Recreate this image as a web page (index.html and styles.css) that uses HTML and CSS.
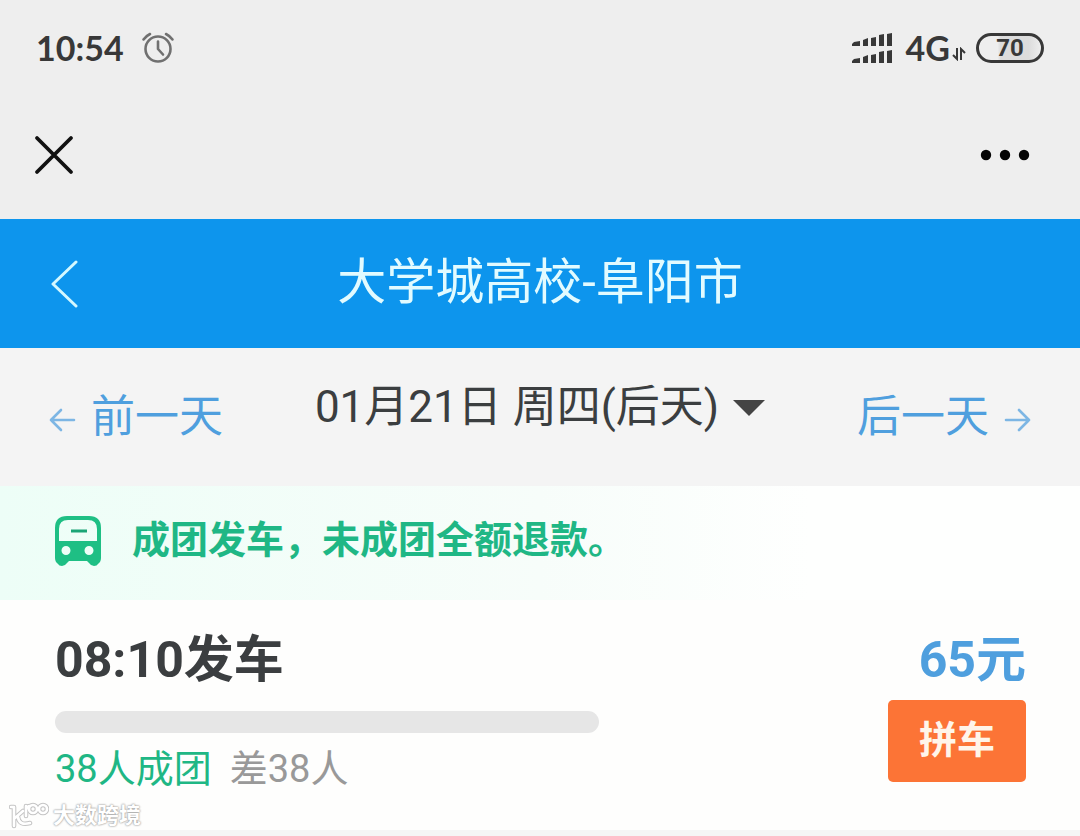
FILE: index.html
```html
<!DOCTYPE html>
<html lang="zh-CN">
<head>
  <meta charset="UTF-8" />
  <meta name="viewport" content="width=device-width, initial-scale=1.0" />
  <title>大学城高校-阜阳市</title>
  <link rel="stylesheet" href="styles.css">
</head>
<body>
  <div class="status-bar">
    <div class="status-group">
      <span class="clock">10:54</span>
      <svg class="alarm" width="34" height="34" viewBox="0 0 34 34" fill="none" stroke="#707070" stroke-width="2.6" stroke-linecap="round" stroke-linejoin="round">
        <circle cx="17" cy="18" r="12.5" />
        <path d="M17 10.5V18l5 5.5" />
        <path d="M2.5 8.5Q5 5 9 3M31.5 8.5Q29 5 25 3" />
      </svg>
    </div>
    <div class="status-group">
      <svg class="signal" width="42" height="32" viewBox="0 0 42 32" fill="#383838">
        <path d="M0 12l2-2 6-1v5H0zM11 8l5-2v8h-5zM19 6l5-1v9h-5zM27 3l5-1v12h-5zM35 2l5-1v13h-5z" />
        <path d="M0 29l2-2 6-1v5H0zM11 25l5-2v8h-5zM19 23l5-1v9h-5zM27 20l5-1v12h-5zM35 19l5-1v13h-5z" />
      </svg>
      <span class="network">4G</span>
      <svg class="updown" width="14" height="14" viewBox="0 0 14 14" fill="none" stroke="#383838" stroke-width="2">
        <path d="M5 1v11L1 8M9 13V2l4 4" />
      </svg>
      <span class="battery">70</span>
    </div>
  </div>

  <div class="nav-bar">
    <button class="icon-btn" aria-label="关闭">
      <svg width="40" height="40" viewBox="0 0 40 40" stroke="#111" stroke-width="3.8" stroke-linecap="round">
        <path d="M3 3l34 34M37 3L3 37" />
      </svg>
    </button>
    <button class="icon-btn" aria-label="更多">
      <svg width="50" height="12" viewBox="0 0 50 12" fill="#050505">
        <circle cx="6" cy="6" r="5.2" />
        <circle cx="25" cy="6" r="5.2" />
        <circle cx="44" cy="6" r="5.2" />
      </svg>
    </button>
  </div>

  <header class="header">
    <button class="icon-btn back" aria-label="返回">
      <svg width="28" height="50" viewBox="0 0 28 50" fill="none" stroke="#d4f8ff" stroke-width="3" stroke-linecap="round" stroke-linejoin="round">
        <path d="M26 3L3 25l23 22" />
      </svg>
    </button>
    <h1>大学城高校-阜阳市</h1>
  </header>

  <nav class="date-bar">
    <a href="#" class="day-link">
      <svg width="28" height="28" viewBox="0 0 28 28" fill="none" stroke="#7db6e4" stroke-width="2.6" stroke-linecap="round" stroke-linejoin="round">
        <path d="M26 14H3M13 4L3 14l10 10" />
      </svg>
      <span>前一天</span>
    </a>
    <button class="date-btn">
      <span>01月21日 周四(后天)</span>
      <i class="caret"></i>
    </button>
    <a href="#" class="day-link next">
      <span>后一天</span>
      <svg width="28" height="28" viewBox="0 0 28 28" fill="none" stroke="#7db6e4" stroke-width="2.6" stroke-linecap="round" stroke-linejoin="round">
        <path d="M2 14h23M15 4l10 10-10 10" />
      </svg>
    </a>
  </nav>

  <div class="notice">
    <svg width="48" height="52" viewBox="0 0 48 52">
      <path fill="#1ebf84" fill-rule="evenodd" d="M13 1h22Q47 1 47 13v30q0 2-1 4l-2 2q-1 2-4 2-3 0-5-3l-2-2H15l-2 2q-2 3-5 3-3 0-4-2l-2-2q-1-2-1-4V13Q1 1 13 1zM14 5Q5 5 5 14v12h38V14q0-9-9-9zM12 31a4.500 4.500 0 1 0 0 9 4.500 4.500 0 0 0 0-9zM35 31a4.500 4.500 0 1 0 0 9 4.500 4.500 0 0 0 0-9z" />
      <path d="M17 16h16" stroke="#1ba576" stroke-width="3" />
    </svg>
    <p>成团发车，未成团全额退款。</p>
  </div>

  <main class="trip">
    <div class="trip-info">
      <h2>08:10发车</h2>
      <div class="progress" role="progressbar" aria-label="成团进度" aria-valuenow="0" aria-valuemin="0" aria-valuemax="38"></div>
      <p class="people"><span class="need">38人成团</span><span>差38人</span></p>
    </div>
    <div class="trip-side">
      <strong class="price">65元</strong>
      <button class="join-btn">拼车</button>
    </div>
    <div class="watermark">
      <svg width="40" height="28" viewBox="0 0 40 28" fill="none" stroke-linecap="round" stroke-linejoin="round">
        <g stroke="#c4c4c4" stroke-width="4.6">
          <path d="M2 5h3v19M14 9l-8 7M9 15q1 9 12 6" />
          <path d="M17 14V4M17 8q1-4 4-4" />
          <circle cx="24" cy="7" r="4" />
          <circle cx="34" cy="7" r="4" />
        </g>
        <g stroke="#fff" stroke-width="2.6">
          <path d="M2 5h3v19M14 9l-8 7M9 15q1 9 12 6" />
          <path d="M17 14V4M17 8q1-4 4-4" />
          <circle cx="24" cy="7" r="4" />
          <circle cx="34" cy="7" r="4" />
        </g>
      </svg>
      <span>大数跨境</span>
    </div>
  </main>
</body>
</html>
```
FILE: styles.css
```css
:root {
  --blue: #0d95ed;
  --link: #4f9fde;
  --green: #1fb785;
  --orange: #fc7436;
  --dark: #3b3e40;
}

* {
  box-sizing: border-box;
}

body {
  margin: 0;
  background: #f5f5f5;
  color: var(--dark);
  font-family: Roboto, "Noto Sans CJK SC", sans-serif;
}

h1, h2, p {
  margin: 0;
}

svg {
  display: block;
  flex-shrink: 0;
}

button {
  border: none;
  padding: 0;
  background: none;
  font-family: inherit;
  color: inherit;
  cursor: pointer;
}

a {
  text-decoration: none;
}

.status-bar,
.nav-bar {
  display: flex;
  justify-content: space-between;
  align-items: center;
  background: #eee;
}

.status-bar {
  height: 95px;
  padding: 0 36px;
  font-family: Lato, sans-serif;
  font-size: 34px;
  font-weight: bold;
  color: #383838;
}

.status-group {
  display: flex;
  align-items: center;
}

.alarm {
  margin-left: 17px;
}

.network {
  margin-left: 12px;
}

.updown {
  margin: 12px 10px 0 2px;
}

.battery {
  width: 68px;
  height: 30px;
  border: 3px solid #383838;
  border-radius: 15px;
  background: linear-gradient(90deg, #eee 30%, #dcdcdc 35%, #dcdcdc 80%, #eee);
  font-family: Roboto, sans-serif;
  font-size: 24px;
  line-height: 25px;
  text-align: center;
}

.nav-bar {
  height: 124px;
  padding: 0 50px 4px 34px;
}

.header {
  display: grid;
  grid-template-columns: 1fr auto 1fr;
  align-items: center;
  height: 129px;
  padding: 0 50px;
  background: var(--blue);
}

.header h1 {
  padding-bottom: 12px;
  font-size: 49px;
  font-weight: normal;
  color: #e2fbff;
}

.back {
  justify-self: start;
}

.date-bar {
  display: grid;
  grid-template-columns: 1fr auto 1fr;
  align-items: center;
  height: 138px;
  padding: 0 48px;
  background: #f4f4f4;
  font-size: 44px;
}

.day-link {
  display: flex;
  align-items: center;
  gap: 15px;
  padding-bottom: 8px;
  color: var(--link);
}

.day-link svg {
  margin-top: 14px;
}

.day-link.next {
  justify-content: flex-end;
}

.date-btn {
  display: flex;
  align-items: center;
  gap: 14px;
  padding-bottom: 28px;
  font-size: 44px;
}

.caret {
  margin-top: 10px;
  border: 16px solid transparent;
  border-top-color: #444;
  border-bottom: none;
}

.notice {
  display: flex;
  align-items: center;
  gap: 30px;
  height: 114px;
  padding: 0 54px 4px;
  background: linear-gradient(90deg, #edfef7, #f7fdfa 50%, #fefffe 75%);
  color: var(--green);
  font-size: 38px;
  font-weight: bold;
}

.notice p {
  padding-bottom: 10px;
}

.trip {
  position: relative;
  display: flex;
  justify-content: space-between;
  height: 230px;
  padding: 24px 54px 0 55px;
  background: #fefefd;
}

.trip-info {
  width: 56%;
}

.trip h2,
.price {
  font-size: 50px;
  line-height: 72px;
}

.progress {
  height: 22px;
  margin-top: 15px;
  border-radius: 11px;
  background: #e6e6e6;
}

.people {
  display: flex;
  gap: 18px;
  margin-top: 8px;
  font-size: 38px;
  line-height: 56px;
  color: #999;
}

.people .need {
  color: var(--green);
}

.trip-side {
  display: flex;
  flex-direction: column;
  align-items: flex-end;
}

.price {
  color: var(--link);
}

.join-btn {
  width: 138px;
  height: 82px;
  margin-top: 4px;
  padding-bottom: 10px;
  border-radius: 5px;
  background: var(--orange);
  color: #fff5ea;
  font-size: 38px;
  font-weight: bold;
}

.watermark {
  position: absolute;
  left: 9px;
  bottom: 0;
  display: flex;
  align-items: center;
  gap: 4px;
  font-size: 22px;
  font-weight: bold;
  line-height: 28px;
  color: #fff;
  text-shadow: 0 0 2px #999, 0 0 2px #aaa;
}
```
